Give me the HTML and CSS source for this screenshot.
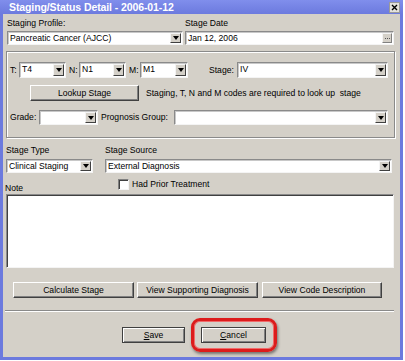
FILE: index.html
```html
<!DOCTYPE html>
<html lang="en">
<head>
    <meta charset="UTF-8">
    <meta name="viewport" content="width=device-width, initial-scale=1.0">
    <title>Staging/Status Detail</title>
    <link rel="stylesheet" href="styles.css">
</head>
<body>
    <div class="window">
        <div class="titlebar">
            <span class="title">Staging/Status Detail - 2006-01-12</span>
            <span class="close">
                <svg width="9" height="9" viewBox="0 0 9 9"><path d="M2 2 L7 7 M7 2 L2 7" stroke="#000" stroke-width="1.4"/></svg>
            </span>
        </div>

        <div class="top-row">
            <div class="field profile">
                <label>Staging Profile:</label>
                <div class="combo"><span class="value">Pancreatic Cancer (AJCC)</span><span class="arrow"></span></div>
            </div>
            <div class="field date">
                <label>Stage Date</label>
                <div class="combo"><span class="value">Jan 12, 2006</span><span class="dots"><i></i><i></i><i></i></span></div>
            </div>
        </div>

        <div class="group">
            <div class="tnm-row">
                <span class="lbl lbl-t">T:</span>
                <div class="combo w-t"><span class="value">T4</span><span class="arrow"></span></div>
                <span class="lbl lbl-n">N:</span>
                <div class="combo w-n"><span class="value">N1</span><span class="arrow"></span></div>
                <span class="lbl lbl-m">M:</span>
                <div class="combo w-m"><span class="value">M1</span><span class="arrow"></span></div>
                <span class="lbl lbl-stage">Stage:</span>
                <div class="combo w-stage"><span class="value">IV</span><span class="arrow"></span></div>
            </div>
            <div class="lookup-row">
                <div class="btn lookup">Lookup Stage</div>
                <span class="hint">Staging, T, N and M codes are required to look up&nbsp; stage</span>
            </div>
            <div class="grade-row">
                <span class="lbl lbl-grade">Grade:</span>
                <div class="combo w-grade"><span class="value"></span><span class="arrow"></span></div>
                <span class="lbl lbl-prog">Prognosis Group:</span>
                <div class="combo w-prog"><span class="value"></span><span class="arrow"></span></div>
            </div>
        </div>

        <div class="type-row">
            <div class="field stage-type">
                <label>Stage Type</label>
                <div class="combo"><span class="value">Clinical Staging</span><span class="arrow"></span></div>
            </div>
            <div class="field stage-source">
                <label>Stage Source</label>
                <div class="combo"><span class="value">External Diagnosis</span><span class="arrow"></span></div>
            </div>
        </div>

        <div class="note-row">
            <span class="note-label">Note</span>
            <span class="checkbox"></span>
            <span class="check-text">Had Prior Treatment</span>
        </div>
        <div class="note-box"></div>

        <div class="action-row">
            <div class="btn calc">Calculate Stage</div>
            <div class="btn supporting">View Supporting Diagnosis</div>
            <div class="btn code-desc">View Code Description</div>
        </div>

        <div class="separator"></div>

        <div class="footer-row">
            <div class="btn dialog-btn save"><u>S</u>ave</div>
            <div class="highlight">
                <div class="btn dialog-btn cancel"><u>C</u>ancel</div>
            </div>
        </div>
    </div>
</body>
</html>
```

FILE: styles.css
```css
body {
    margin: 0;
    background: #fff;
    font-family: "Liberation Sans", Arial, sans-serif;
    font-size: 8.6px;
    color: #000;
}
.window {
    width: 397px;
    height: 357px;
    border: 3px solid #6c7ade;
    border-top: 0;
    background: #d4d0c8;
}
.titlebar {
    height: 14px;
    margin: 0 -3px;
    padding: 0 3px 0 9px;
    display: flex;
    align-items: center;
    justify-content: space-between;
    background: linear-gradient(#808eec, #6c7ade);
    color: #fff;
    font-size: 10.5px;
    font-weight: bold;
    letter-spacing: -0.1px;
}
.close {
    width: 9px;
    height: 9px;
    display: flex;
    background: #e4e2dc;
    border: 1px solid #9a9a9a;
    margin-top: 1px;
}

/* fields */
.field label {
    display: block;
    height: 11px;
    line-height: 11px;
    margin-bottom: 2px;
}
.combo {
    box-sizing: border-box;
    height: 14px;
    display: flex;
    align-items: stretch;
    background: #fff;
    border: 1px solid;
    border-color: #8a8a8a #f4f4f4 #f4f4f4 #8a8a8a;
    box-shadow: inset 1px 1px 0 #c8c8c8;
    padding: 1px;
}
.combo .value {
    flex: 1;
    line-height: 11px;
    padding-left: 1px;
    white-space: nowrap;
    overflow: hidden;
}
.arrow {
    box-sizing: border-box;
    width: 11px;
    background: #d4d0c8;
    border: 1px solid;
    border-color: #f4f4f4 #404040 #404040 #f4f4f4;
    display: flex;
    align-items: center;
    justify-content: center;
}
.arrow::after {
    content: "";
    border-top: 4px solid #000;
    border-left: 3.5px solid transparent;
    border-right: 3.5px solid transparent;
}
.dots {
    box-sizing: border-box;
    width: 10px;
    background: #d4d0c8;
    border: 1px solid;
    border-color: #f4f4f4 #808080 #808080 #f4f4f4;
    display: flex;
    align-items: center;
    justify-content: center;
    gap: 1px;
}
.dots i {
    width: 1px;
    height: 1px;
    background: #555;
}

.top-row {
    display: flex;
    margin-top: 4px;
}
.profile {
    margin-left: 4px;
    width: 176px;
}
.date {
    margin-left: 2px;
    width: 209px;
}

/* group box */
.group {
    box-sizing: border-box;
    margin: 6px 0 0 3px;
    width: 389px;
    height: 87px;
    padding: 10px 0 0 3px;
    border: 1px solid #8a8a8a;
    box-shadow: inset 1px 1px 0 #fff, 1px 1px 0 #fff;
}
.tnm-row,
.lookup-row,
.grade-row {
    display: flex;
    align-items: center;
}
.tnm-row {
    height: 16px;
}
.tnm-row .combo {
    height: 16px;
}
.lbl {
    line-height: 11px;
    white-space: nowrap;
}
.lbl-t { width: 9px; }
.w-t { width: 47px; }
.lbl-n { width: 10px; margin-left: 3px; }
.w-n { width: 47px; }
.lbl-m { width: 11px; margin-left: 3px; }
.w-m { width: 48px; }
.lbl-stage { width: 28px; margin-left: 21px; }
.w-stage { width: 151px; }

.lookup-row {
    margin-top: 7px;
    height: 16px;
}
.lookup {
    margin-left: 20px;
    width: 109px;
    height: 16px;
}
.hint {
    margin-left: 7px;
    white-space: nowrap;
}

.grade-row {
    margin-top: 9px;
    height: 15px;
}
.grade-row .combo {
    height: 15px;
}
.lbl-grade { width: 29px; }
.w-grade { width: 59px; }
.lbl-prog { width: 73px; margin-left: 3px; }
.w-prog { width: 214px; }

/* stage type / source */
.type-row {
    display: flex;
    margin-top: 7px;
}
.stage-type {
    margin-left: 3px;
    width: 87px;
}
.stage-source {
    margin-left: 12px;
    width: 287px;
}
.type-row label {
    margin-bottom: 3px;
}

.note-row {
    display: flex;
    height: 21px;
}
.note-label {
    align-self: flex-end;
    line-height: 11px;
    margin-left: 2px;
    width: 113px;
}
.checkbox {
    box-sizing: border-box;
    margin-top: 6px;
    width: 11px;
    height: 11px;
    background: #fff;
    border: 1px solid;
    border-color: #808080 #f4f4f4 #f4f4f4 #808080;
    box-shadow: inset 1px 1px 0 #404040;
}
.check-text {
    margin: 6px 0 0 3px;
    line-height: 11px;
}
.note-box {
    box-sizing: border-box;
    margin-left: 3px;
    width: 388px;
    height: 74px;
    background: #fff;
    border: 1px solid;
    border-color: #8a8a8a #f4f4f4 #f4f4f4 #8a8a8a;
    box-shadow: inset 1px 1px 0 #404040;
}

/* buttons */
.btn {
    box-sizing: border-box;
    display: flex;
    align-items: center;
    justify-content: center;
    background: #d4d0c8;
    border: 1px solid;
    border-color: #fff #404040 #404040 #fff;
    box-shadow: inset -1px -1px 0 #808080;
    white-space: nowrap;
}
.action-row {
    display: flex;
    margin-top: 14px;
    height: 16px;
}
.calc { margin-left: 10px; width: 121px; }
.supporting { margin-left: 3px; width: 121px; }
.code-desc { margin-left: 4px; width: 120px; }

.separator {
    margin: 12px 0 0 2px;
    width: 389px;
    height: 1px;
    background: #8a8a8a;
    border-bottom: 1px solid #fff;
}

.footer-row {
    display: flex;
    align-items: flex-start;
    margin-top: 6px;
}
.dialog-btn {
    height: 16px;
    border: 1px solid #404040;
    box-shadow: inset 1px 1px 0 #fff, inset -1px -1px 0 #808080;
}
.save {
    margin: 9px 0 0 119px;
    width: 63px;
}
.highlight {
    margin-left: 6px;
    padding: 6px 8px 6px 7px;
    border: 3px solid #dc1c1c;
    border-radius: 9px;
    box-shadow: 1px 2px 3px rgba(0, 0, 0, 0.45), inset 0 0 0 1px #f06a6a;
}
.cancel {
    width: 65px;
}
```
